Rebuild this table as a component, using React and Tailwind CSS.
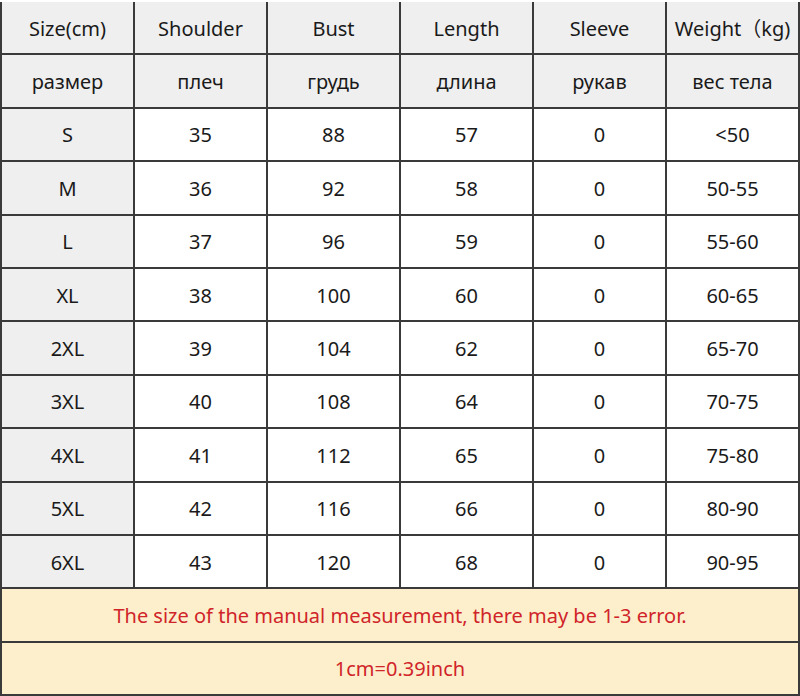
const header = [
  ["Size(cm)", "Shoulder", "Bust", "Length", "Sleeve", "Weight（kg)"],
  ["размер", "плеч", "грудь", "длина", "рукав", "вес тела"],
];

const rows = [
  ["S", "35", "88", "57", "0", "<50"],
  ["M", "36", "92", "58", "0", "50-55"],
  ["L", "37", "96", "59", "0", "55-60"],
  ["XL", "38", "100", "60", "0", "60-65"],
  ["2XL", "39", "104", "62", "0", "65-70"],
  ["3XL", "40", "108", "64", "0", "70-75"],
  ["4XL", "41", "112", "65", "0", "75-80"],
  ["5XL", "42", "116", "66", "0", "80-90"],
  ["6XL", "43", "120", "68", "0", "90-95"],
];

const cell = "flex items-center justify-center pt-[2px] border-r-2 border-b-2 border-[#3a3a3a]";

export default function App() {
  return (
    <div className="w-[800px] h-[696px] bg-white pt-[2px] font-['Noto_Sans','Noto_Sans_CJK_SC',sans-serif] text-[20px] text-[#1a1a1a]">
      <div className="grid grid-cols-6 grid-rows-[repeat(13,53.4px)] border-l-2 border-[#3a3a3a] w-[800px]">
        {header.map((r, i) =>
          r.map((t, j) => (
            <div key={`h${i}${j}`} className={`${cell} bg-[#efefef] ${j === 5 ? "whitespace-pre" : ""}`}>
              {t}
            </div>
          ))
        )}
        {rows.map((r, i) =>
          r.map((t, j) => (
            <div key={`r${i}${j}`} className={`${cell} ${j === 0 ? "bg-[#efefef]" : "bg-white"}`}>
              {t}
            </div>
          ))
        )}
        <div className={`${cell} col-span-6 bg-[#fdefcb] text-[#d0242a]`}>
          The size of the manual measurement, there may be 1-3 error.
        </div>
        <div className={`${cell} col-span-6 bg-[#fdefcb] text-[#d0242a]`}>
          1cm=0.39inch
        </div>
      </div>
    </div>
  );
}
